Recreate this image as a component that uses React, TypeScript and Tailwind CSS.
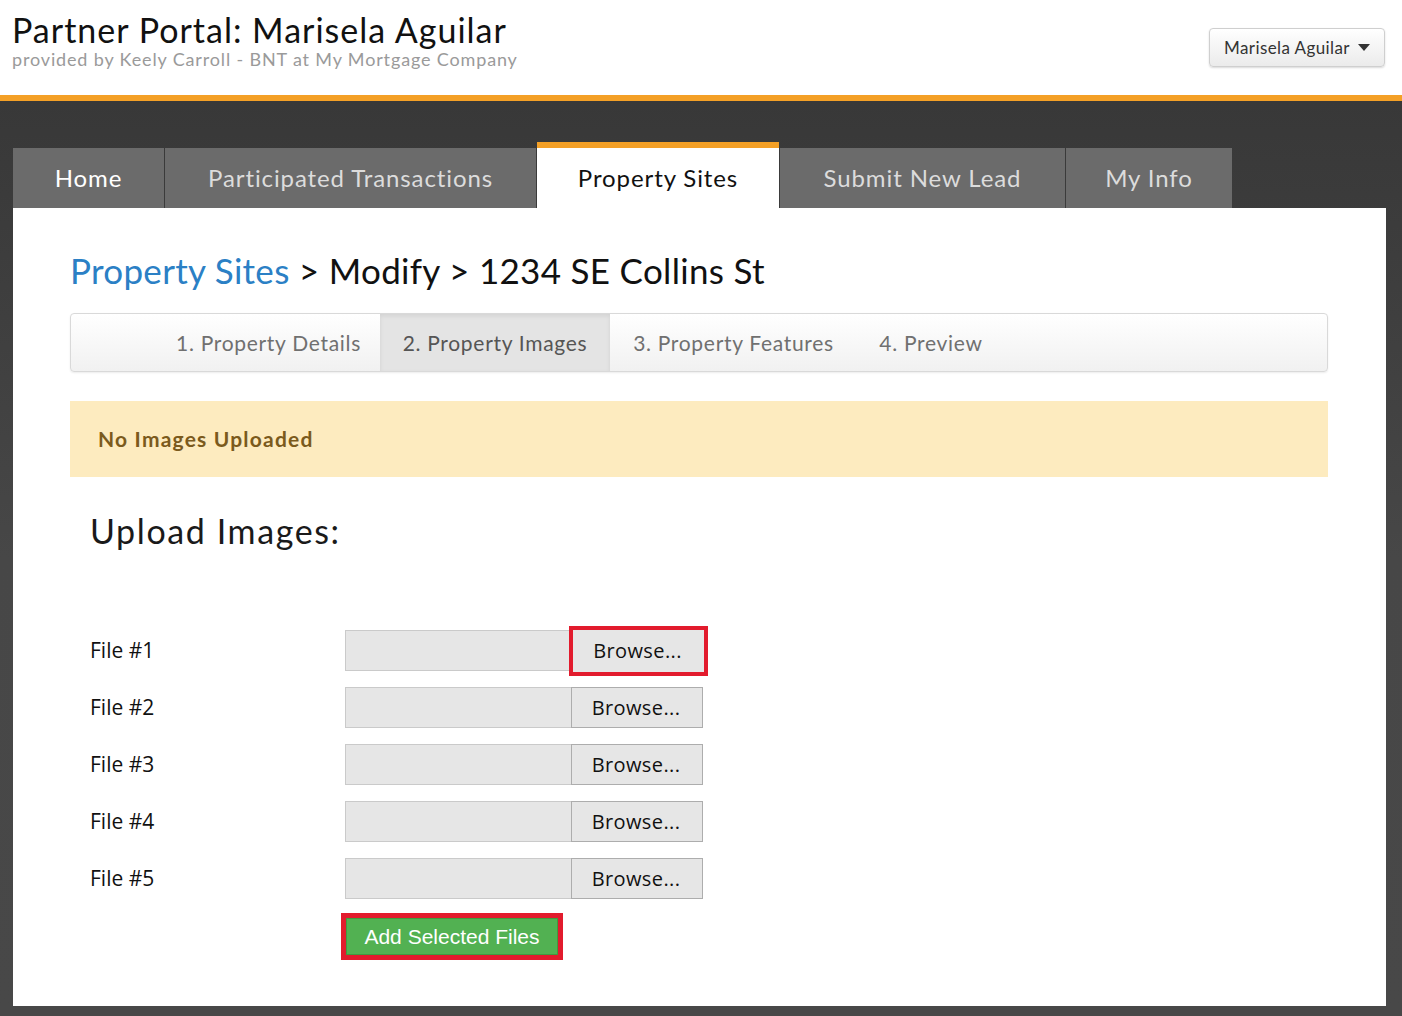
import React from "react";

const PX = { fontFamily: '"Lato", "Open Sans", sans-serif' };
const SEG = { fontFamily: '"Open Sans", "Noto Sans", sans-serif' };

function Caret() {
  return (
    <svg width="12" height="7" viewBox="0 0 12 7" className="ml-2">
      <path d="M0 0 L12 0 L6 7 Z" fill="#333" />
    </svg>
  );
}

export default function App() {
  const tabs = [
    { label: "Home", w: "w-[151px]", text: "text-white" },
    { label: "Participated Transactions", w: "w-[371px]", text: "text-[#dcdcdc]" },
    { label: "Property Sites", w: "w-[242px]", active: true },
    { label: "Submit New Lead", w: "w-[285px]", text: "text-[#dcdcdc]" },
    { label: "My Info", w: "w-[166px]", text: "text-[#dcdcdc]" },
  ];
  const files = [1, 2, 3, 4, 5];
  return (
    <div className="w-[1402px] h-[1016px] overflow-hidden bg-white" style={PX}>
      {/* Header */}
      <div className="h-[95px] flex justify-between bg-white">
        <div className="pl-[12px] pt-[10px]">
          <div className="text-[34px] leading-[40px] text-[#111] tracking-[1px]">
            Partner Portal: Marisela Aguilar
          </div>
          <div className="text-[18px] leading-[18px] text-[#9a9a9a] tracking-[0.85px]">
            provided by Keely Carroll - BNT at My Mortgage Company
          </div>
        </div>
        <div className="pt-[28px] pr-[17px]">
          <div className="h-[39px] w-[176px] flex items-center justify-center rounded-[4px] border border-[#cfcfcf] bg-gradient-to-b from-white to-[#ebebeb] shadow-[0_1px_2px_rgba(0,0,0,0.15)] text-[17px] text-[#333] tracking-[0.4px]">
            Marisela Aguilar
            <Caret />
          </div>
        </div>
      </div>
      <div className="h-[6px] bg-[#f4a026]" />
      {/* Dark area */}
      <div className="h-[915px] bg-gradient-to-b from-[#383838] via-[#474747] to-[#484848] pl-[13px] pr-[16px] pt-[41px]">
        {/* Tabs */}
        <div className="flex items-end h-[66px]">
          {tabs.map((t) =>
            t.active ? (
              <div
                key={t.label}
                className={`${t.w} h-[66px] bg-white border-t-[6px] border-[#f4a026] flex items-center justify-center text-[24px] tracking-[0.9px] text-[#111] mr-[1px]`}
              >
                {t.label}
              </div>
            ) : (
              <div
                key={t.label}
                className={`${t.w} h-[60px] bg-[#6b6b6b] flex items-center justify-center text-[24px] tracking-[0.9px] ${t.text} mr-[1px]`}
              >
                {t.label}
              </div>
            )
          )}
        </div>
        {/* Panel */}
        <div className="h-[798px] bg-white pl-[57px] pr-[58px] pt-[40px]">
          <div className="text-[35px] leading-[44px] text-[#111] tracking-[0.3px]">
            <span className="text-[#2b80c5]">Property Sites</span> &gt; Modify &gt; 1234 SE Collins St
          </div>
          {/* Steps */}
          <div className="mt-[21px] h-[59px] rounded-[4px] border border-[#d9d9d9] bg-gradient-to-b from-white to-[#f1f1f1] shadow-[0_1px_2px_rgba(0,0,0,0.08)] flex pl-[86px] text-[21px] text-[#707070] tracking-[0.7px]">
            <div className="w-[223px] flex items-center justify-center">1. Property Details</div>
            <div className="w-[230px] flex items-center justify-center bg-[#e4e4e4] text-[#555] shadow-[inset_0_2px_4px_rgba(0,0,0,0.08)]">
              2. Property Images
            </div>
            <div className="w-[247px] flex items-center justify-center">3. Property Features</div>
            <div className="w-[148px] flex items-center justify-center">4. Preview</div>
          </div>
          {/* Alert */}
          <div className="mt-[29px] h-[76px] bg-[#fdebbf] flex items-center pl-[28px] text-[21px] font-bold text-[#7b5a1c] tracking-[1.2px]">
            No Images Uploaded
          </div>
          {/* Upload */}
          <div className="pl-[20px]">
            <div className="mt-[32px] text-[34px] leading-[44px] text-[#1a1a1a] tracking-[1.6px]">Upload Images:</div>
            <div className="mt-[77px] flex flex-col gap-[16px]">
              {files.map((n) => (
                <div key={n} className="flex items-center h-[41px]">
                  <div className="w-[255px] text-[21px] text-[#111]" style={SEG}>
                    File #{n}
                  </div>
                  <div className="w-[227px] h-[41px] bg-[#e6e6e6] border border-[#cacaca]" />
                  {n === 1 ? (
                    <div className="ml-[-3px] h-[50px] w-[139px] border-[4px] border-[#e21b2d] flex items-center justify-center bg-[#e6e6e6] text-[20px] text-[#111] pr-[2px] tracking-[0.4px]" style={SEG}>
                      Browse...
                    </div>
                  ) : (
                    <div className="ml-[-1px] h-[41px] w-[132px] border border-[#adadad] bg-[#e6e6e6] flex items-center justify-center text-[20px] text-[#111] pr-[2px] tracking-[0.4px]" style={SEG}>
                      Browse...
                    </div>
                  )}
                </div>
              ))}
            </div>
            <div className="mt-[14px] ml-[251px] w-[222px] h-[47px] border-[5px] border-[#e21b2d] bg-[#e21b2d] p-0">
              <div
                className="w-full h-full bg-[#52b152] border border-[#3f9a3f] flex items-center justify-center text-[21px] text-white"
                style={{ fontFamily: '"Liberation Sans", Arial, sans-serif' }}
              >
                Add Selected Files
              </div>
            </div>
          </div>
        </div>
      </div>
    </div>
  );
}
